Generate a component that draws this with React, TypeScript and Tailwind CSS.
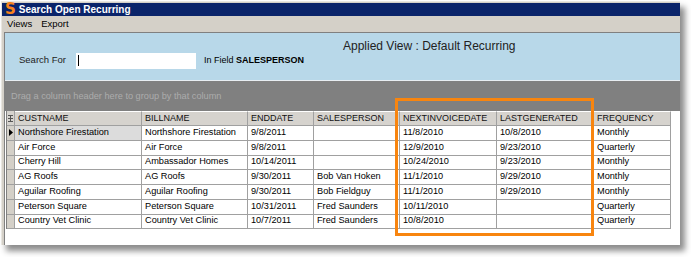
import React from "react";

const columns = [
  { key: "cust", label: "CUSTNAME", w: "w-[127px]" },
  { key: "bill", label: "BILLNAME", w: "w-[106px]" },
  { key: "end", label: "ENDDATE", w: "w-[66px]" },
  { key: "sales", label: "SALESPERSON", w: "w-[86px]" },
  { key: "next", label: "NEXTINVOICEDATE", w: "w-[97px]" },
  { key: "last", label: "LASTGENERATED", w: "w-[97px]" },
  { key: "freq", label: "FREQUENCY", w: "w-[77px]" },
];

const rows = [
  ["Northshore Firestation", "Northshore Firestation", "9/8/2011", "", "11/8/2010", "10/8/2010", "Monthly"],
  ["Air Force", "Air Force", "9/8/2011", "", "12/9/2010", "9/23/2010", "Quarterly"],
  ["Cherry Hill", "Ambassador Homes", "10/14/2011", "", "10/24/2010", "9/23/2010", "Monthly"],
  ["AG Roofs", "AG Roofs", "9/30/2011", "Bob Van Hoken", "11/1/2010", "9/29/2010", "Monthly"],
  ["Aguilar Roofing", "Aguilar Roofing", "9/30/2011", "Bob Fieldguy", "11/1/2010", "9/29/2010", "Monthly"],
  ["Peterson Square", "Peterson Square", "10/31/2011", "Fred Saunders", "10/11/2010", "", "Quarterly"],
  ["Country Vet Clinic", "Country Vet Clinic", "10/7/2011", "Fred Saunders", "10/8/2010", "", "Quarterly"],
];

const App = () => {
  return (
    <div className="relative w-[691px] h-[257px] bg-white overflow-hidden font-['Liberation_Sans',Arial,sans-serif] text-[9px] text-black">
      {/* window */}
      <div className="ml-[1px] mt-[1px] w-[679px] h-[244px] bg-[#d4d0c8] border-t border-l border-[#e8e6e0] flex flex-col shadow-[5px_6px_6px_rgba(0,0,0,0.45)]">
        {/* title bar */}
        <div className="h-[13px] mt-[1px] bg-[#0a246a] flex items-center pl-[3px] gap-[3px]">
          <span className="text-[#f7821b] font-black text-[15px] leading-none font-['DejaVu_Sans',sans-serif] -mt-[1px]">S</span>
          <span className="text-white font-bold text-[10px] leading-none">
            Search Open Recurring
          </span>
        </div>

        {/* menu */}
        <div className="h-[16px] flex items-center gap-[9px] pl-[5px] text-[9.5px]">
          <span>Views</span>
          <span>Export</span>
        </div>

        <div className="flex-1 flex flex-col ml-[2px] border-t border-l border-[#808080]">
          {/* search panel */}
          <div className="h-[48px] bg-[#b8d8e9] border-b border-[#e8eef2] relative flex">
            <div className="flex items-center pl-[14px] pt-[8px] whitespace-nowrap">
              <span className="w-[57px] text-[9.5px] text-[#222]">Search For</span>
              <div className="w-[120px] h-[16px] bg-white flex items-center pl-[2px]">
                <div className="w-px h-[11px] bg-black" />
              </div>
              <span className="text-[9px] ml-[8px]">
                In Field <span className="font-bold">SALESPERSON</span>
              </span>
            </div>
            <div className="absolute left-[338px] top-[4px] text-[12px] text-[#222]">
              Applied View : Default Recurring
            </div>
          </div>

          {/* group panel */}
          <div className="h-[30px] bg-[#808080] flex items-start pl-[6px] pt-[9px] text-[#acacac] text-[9.2px]">
            Drag a column header here to group by that column
          </div>

          {/* grid */}
          <div className="flex-1 bg-white pl-[1px]">
            <div className="border-l border-[#808080] w-[665px]">
              <div className="flex h-[15px] bg-[#d6d3ce]">
                <div className="w-[8px] border-r border-b border-[#a0a0a0] flex items-center justify-center">
                  <svg width="5" height="7" viewBox="0 0 5 7">
                    <rect x="0" y="0" width="5" height="1" fill="#555" />
                    <rect x="0" y="3" width="5" height="1" fill="#555" />
                    <rect x="0" y="6" width="5" height="1" fill="#555" />
                    <rect x="2" y="0" width="1" height="7" fill="#555" />
                  </svg>
                </div>
                {columns.map((c) => (
                  <div
                    key={c.key}
                    className={`${c.w} border-r border-b border-[#a0a0a0] pl-[3px] flex items-center text-[9px] text-[#111] border-t border-t-white whitespace-nowrap overflow-hidden`}
                  >
                    {c.label}
                  </div>
                ))}
              </div>
              {rows.map((r, i) => (
                <div key={i} className="flex h-[14.75px]">
                  <div className="w-[8px] bg-[#d4d0c8] border-r border-b border-[#a0a0a0] flex items-center justify-center">
                    {i === 0 && (
                      <svg width="4" height="7" viewBox="0 0 4 7">
                        <polygon points="0,0 4,3.5 0,7" fill="#000" />
                      </svg>
                    )}
                  </div>
                  {r.map((v, j) => (
                    <div
                      key={j}
                      className={`${columns[j].w} border-r border-b border-[#a0a0a0] pl-[3px] flex items-center whitespace-nowrap overflow-hidden text-[9.2px] ${
                        i === 0 && j === 0 ? "bg-[#dcdcdc]" : "bg-white"
                      }`}
                    >
                      {v}
                    </div>
                  ))}
                </div>
              ))}
            </div>
          </div>
        </div>
      </div>

      {/* highlight annotation */}
      <div className="absolute left-[395px] top-[98px] w-[199px] h-[138px] border-[3px] border-[#f8850f]" />
    </div>
  );
};

export default App;
